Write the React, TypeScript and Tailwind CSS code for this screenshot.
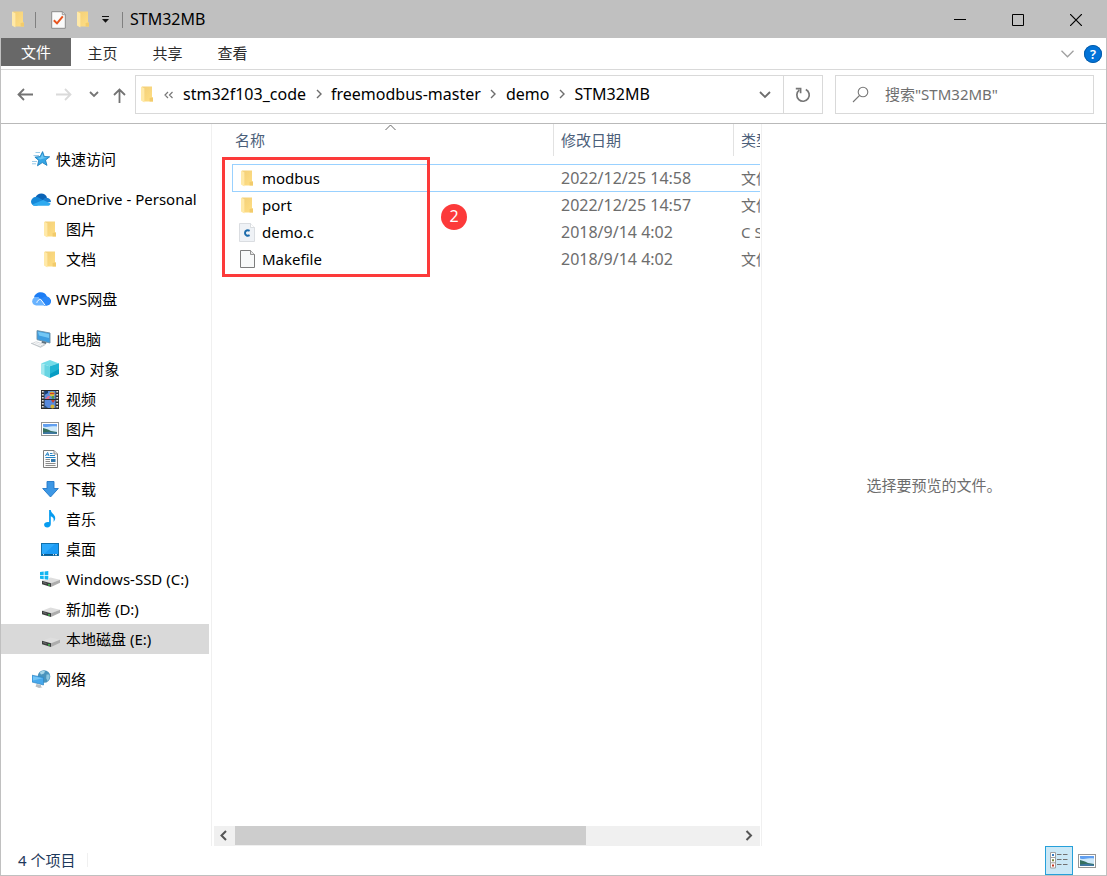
import type { ReactNode } from "react";

type IconProps = { className?: string };

function FolderIcon({ className = "" }: IconProps) {
  return (
    <svg width="12" height="17" viewBox="0 0 12 17" className={`shrink-0 ${className}`} aria-hidden="true">
      <defs>
        <linearGradient id="folderBack" x1="0" x2="1" y1="0" y2="1">
          <stop offset="0" stopColor="#f3cf78" />
          <stop offset="1" stopColor="#ffdf85" />
        </linearGradient>
      </defs>
      <path d="M1 .5H11V11.5H12V15.5H2L1 14Z" fill="url(#folderBack)" />
      <path d="M11 11.5H12V15.5H8.6V12Z" fill="#f2cb6c" />
      <path d="M0 .5L3.4 2.3V16.6L0 14.5Z" fill="#ffe9a8" />
    </svg>
  );
}

function TaskIcon() {
  return (
    <svg width="15" height="18" viewBox="0 0 15 18" aria-hidden="true">
      <path d="M.7 .7H11.5L14.3 3.5V17.3H.7Z" fill="#fafafa" stroke="#8c8c8c" strokeWidth="1" />
      <path d="M11.3 .7V3.7H14.3" fill="#ddd" stroke="#8c8c8c" strokeWidth=".8" />
      <path d="M2.8 9.3L6 12.4L11.8 5.4" fill="none" stroke="#e8541e" strokeWidth="2" />
    </svg>
  );
}

function StarIcon() {
  return (
    <svg width="18" height="16" viewBox="0 0 18 16" aria-hidden="true">
      <path d="M3.5 1.5H8M1.5 4.5H7M0 10.5H5M0 12.8H4" stroke="#9ccbe8" strokeWidth="1" />
      <path d="M10.6 .6L12.3 5.5L17.7 5.8L13.5 9.1L15 14.4L10.3 11.6L5.5 14.8L6.7 9.4L2.9 6.1L8.1 5.6Z" fill="#35a6e6" stroke="#1779b8" strokeWidth=".8" />
      <path d="M10.5 2.5L11.6 6.3L15.5 6.5L8 8.5L5.2 6.8L8.7 6.4Z" fill="#6cc6f3" />
    </svg>
  );
}

function OneDriveIcon() {
  return (
    <svg width="20" height="13" viewBox="0 0 20 13" aria-hidden="true">
      <path d="M4.5 4.3C6.4 -.7 14.3 -1 16 4.6L11.5 8L4.4 7Z" fill="#0b63b6" />
      <path d="M0 8.8C0 5.4 3.3 3 7 4.2L13 7.8L6 12.8H4C1.7 12.8 0 11 0 8.8Z" fill="#1688d8" />
      <path d="M12 7.2C13.2 4.6 16 4.2 18 5.5C19.4 6.4 20 7.5 20 9L12.5 10Z" fill="#1b7fd0" />
      <path d="M1.3 11.5L12.1 7L19.6 10.5C19.2 12 18.2 12.8 16.5 12.8H4.1C2.9 12.8 2 12.4 1.3 11.5Z" fill="#2eaaf0" />
    </svg>
  );
}

function WpsCloudIcon() {
  return (
    <svg width="19" height="14" viewBox="0 0 19 14" aria-hidden="true">
      <path d="M2 5.5C2.8 -.7 13 -2 14.8 4.3L19 8C19.3 11.5 17.5 13.4 14.5 13.4H12L6.5 5.5Z" fill="#1c7df5" />
      <path d="M14.6 4.4C17.3 4.6 18.8 6.7 18.7 9.1C18.6 11.7 16.8 13.4 14.3 13.4H12.2L8 8.1C9.8 6 12 4.4 14.6 4.4Z" fill="#2b88f8" />
      <path d="M4.5 4.9C6.2 4.9 7.6 5.9 8.6 7.2L13.3 13.4H4.2C1.9 13.4 .2 11.5 .2 9.2C.2 6.8 2.1 4.9 4.5 4.9Z" fill="#69b3ff" />
      <path d="M4.8 10.8C5.2 8.9 7 7.3 8.7 7.3L13.2 13.3" stroke="#fff" strokeWidth="1" fill="none" />
    </svg>
  );
}

function ComputerIcon() {
  return (
    <svg width="20" height="18" viewBox="0 0 20 18" aria-hidden="true">
      <path d="M6 .6L19 3V13L6 9.6Z" fill="#3e9de0" stroke="#6c8ea5" strokeWidth=".9" />
      <path d="M7 1.8L18 3.9V8L8 5.5Z" fill="#73c7f5" />
      <path d="M11 11L15.5 12.2L15 14L10.5 13Z" fill="#5f7280" />
      <path d="M0 13.2L5.2 11.2L14.5 14.5L9.5 17.3Z" fill="#d5d9dc" />
      <path d="M2.5 13.2L10 15.8M4.3 12.4L12 15" stroke="#fff" strokeWidth=".8" />
      <path d="M0 13.2L9.5 17.3L14.5 14.5" fill="none" stroke="#a3abb2" strokeWidth=".6" />
    </svg>
  );
}

function CubeIcon() {
  return (
    <svg width="18" height="18" viewBox="0 0 18 18" aria-hidden="true">
      <path d="M0 3.5L9 0L18 3.5L9 6.5Z" fill="#74dce8" />
      <path d="M0 3.5L9 6.5V18L0 14Z" fill="#a3e8ef" />
      <path d="M9 6.5L18 3.5V14L9 18Z" fill="#069cc3" />
      <path d="M3.5 4.7L9 6.5V18L3.5 15.5Z" fill="#66d4e2" />
      <path d="M9 6.5L18 3.5V9L9 14Z" fill="#1fb4d3" />
    </svg>
  );
}

function VideoIcon() {
  return (
    <svg width="18" height="19" viewBox="0 0 18 19" aria-hidden="true">
      <rect width="18" height="19" fill="#2b2b2b" />
      <rect x="3.5" y="1" width="11" height="8" fill="#5d8fdf" />
      <rect x="3.5" y="10" width="11" height="8" fill="#588add" />
      <path d="M1.8 1V19M16.2 1V19" stroke="#e6e6e6" strokeWidth="1.8" strokeDasharray="1.6 1.4" />
      <path d="M3.5 1H7V3L3.5 5Z" fill="#183f70" />
      <circle cx="11" cy="4" r="2.5" fill="#d7c239" />
      <path d="M9 3.5H13.5" stroke="#cf3b2d" strokeWidth="1.4" />
      <circle cx="12" cy="7.5" r="1.4" fill="#4f9642" />
      <path d="M4 9L7 6H9L8 9Z" fill="#e16b8b" />
      <path d="M10 10L14 10L12 13Z" fill="#c94330" />
      <circle cx="11.5" cy="16.5" r="2" fill="#d7b434" />
      <path d="M3.5 15L7 18H3.5Z" fill="#274f7d" />
    </svg>
  );
}

function PictureIcon() {
  return (
    <svg width="18" height="14" viewBox="0 0 18 14" aria-hidden="true">
      <rect x=".5" y=".5" width="17" height="13" fill="#fff" stroke="#959595" />
      <rect x="2" y="2" width="14" height="10" fill="#cfe9fa" />
      <path d="M2 2H16V4.5C11 3.5 7 6 2 4.5Z" fill="#619ff0" />
      <path d="M2 6L7 7.5L10 9L16 10V12H2Z" fill="#35705f" />
      <path d="M2 10.5L8 9.8L16 10.8V12H2Z" fill="#3f78a2" />
    </svg>
  );
}

function DocumentIcon() {
  return (
    <svg width="15" height="18" viewBox="0 0 15 18" aria-hidden="true">
      <path d="M.5 .5H11L14.5 4V17.5H.5Z" fill="#fcfcfc" stroke="#7e7e7e" />
      <path d="M11 .5V4H14.5" fill="#e4e4e4" stroke="#7e7e7e" strokeWidth=".8" />
      <path d="M2.4 6L4.6 2.5L6 6M3.3 4.8H5.4M7 3.5H9.5M7 5.5H12" fill="none" stroke="#2382c4" strokeWidth="1" />
      <path d="M2.5 7.5H12.5" stroke="#2382c4" />
      <path d="M2.5 9.5H7M2.5 11.5H7M2.5 13.5H12.5M2.5 15.5H12.5" stroke="#8b8b8b" />
      <rect x="8" y="9" width="4.5" height="3" fill="#337aad" />
    </svg>
  );
}

function DownloadIcon() {
  return (
    <svg width="17" height="17" viewBox="0 0 17 17" aria-hidden="true">
      <path d="M5 .5H12V7.5H16.3L8.5 16L.7 7.5H5Z" fill="#3c97e5" stroke="#2377c6" strokeWidth=".9" />
    </svg>
  );
}

function MusicIcon() {
  return (
    <svg width="12" height="18" viewBox="0 0 12 18" aria-hidden="true">
      <path d="M5.1 0H6.8C7 3.7 11.6 4.3 11.2 8.5C11.1 9.8 10.4 11 9.5 11.8C10.1 8.9 9.5 7.5 6.8 6.3V14C6.8 16.3 5.2 17.4 3.3 17.4C1.4 17.4 .1 16.4 .1 14.8C.1 12.9 2.4 11.7 5.1 12.2Z" fill="#079cf0" />
    </svg>
  );
}

function DesktopIcon() {
  return (
    <svg width="18" height="13" viewBox="0 0 18 13" aria-hidden="true">
      <rect x=".5" y=".5" width="17" height="12" fill="#1b9bf5" stroke="#1070ab" />
      <path d="M1 1H14L3 11H1Z" fill="#39b2ff" opacity=".6" />
      <path d="M1 11.7H17" stroke="#0b5687" strokeWidth="1.3" />
      <path d="M2 11.7H3M12 11.7H13M14 11.7H16" stroke="#fff" strokeWidth="1" />
    </svg>
  );
}

function DriveIcon({ system = false }: { system?: boolean }) {
  return (
    <svg width="20" height="16" viewBox="0 0 20 16" aria-hidden="true">
      <path d="M2 9.8L10.5 6.5L20 8.8L11 12.4Z" fill="#dedede" />
      <path d="M2 9.8L11 12.2V16L2 13.2Z" fill="#3c3e3f" />
      <path d="M11 12.2L20 8.8V11.8L11 16Z" fill="#adadad" />
      <path d="M3 11.5L6.5 12.5" stroke="#888" strokeWidth=".7" />
      <circle cx="9" cy="13.8" r=".9" fill="#46dd54" />
      {system && (
        <>
          <path d="M0 0H9V9H0Z" fill="#fff" />
          <path d="M0 1L3.7 .5V3.9H0ZM4.6 .4L8.3 0V3.9H4.6ZM0 4.8H3.7V8.2L0 7.7ZM4.6 4.8H8.3V8.7L4.6 8.3Z" fill="#13b6f1" />
        </>
      )}
    </svg>
  );
}

function NetworkIcon() {
  return (
    <svg width="19" height="18" viewBox="0 0 19 18" aria-hidden="true">
      <circle cx="12" cy="6.5" r="6.3" fill="#4a94bd" />
      <path d="M8 2.2C9.6 .8 11.6 .6 13 1.2L12 3.6L9.5 4.6L8.5 4Z" fill="#a7d6e8" />
      <path d="M14.5 4.4L17.4 4.6C18.2 7.4 17 10 15.6 11L14.2 8.2Z" fill="#8cc6df" />
      <path d="M0 5.2L11.5 7.5V15L0 12Z" fill="#47a8ec" stroke="#2f86c4" strokeWidth=".7" />
      <path d="M1 6.2L10.5 8.2L1 10.5Z" fill="#74c5f6" />
      <path d="M4.5 14L9 15V16.5L10.5 17.2L7 18L3.5 16.5Z" fill="#b7bec3" />
    </svg>
  );
}

function CFileIcon() {
  return (
    <svg width="16" height="19" viewBox="0 0 16 19" aria-hidden="true">
      <path d="M.5 .5H11.5L15.5 4.5V18.5H.5Z" fill="#eff2f6" stroke="#dadde1" />
      <path d="M11.5 .5V4.5H15.5" fill="#fff" stroke="#d2d5d9" strokeWidth=".8" />
      <path d="M10.6 7.8C8.8 6.8 6 7.4 6 10C6 12.7 8.8 13.2 10.6 12.2" fill="none" stroke="#1d6bab" strokeWidth="2" />
    </svg>
  );
}

function PlainFileIcon() {
  return (
    <svg width="15" height="18" viewBox="0 0 15 18" aria-hidden="true">
      <path d="M.5 .5H10.5L14.5 4.5V17.5H.5Z" fill="#f8f9f9" stroke="#7d7d7d" />
      <path d="M10.5 .5V4.5H14.5" fill="#e8e8e8" stroke="#7d7d7d" strokeWidth=".8" />
    </svg>
  );
}

function Chevron({ d, w, h, color, stroke = 1 }: { d: string; w: number; h: number; color: string; stroke?: number }) {
  return (
    <svg width={w} height={h} viewBox={`0 0 ${w} ${h}`} className="shrink-0" aria-hidden="true">
      <path d={d} fill="none" stroke={color} strokeWidth={stroke} />
    </svg>
  );
}

type NavEntry = { label: string; icon: ReactNode; child?: boolean; selected?: boolean };

const navGroups: NavEntry[][] = [
  [{ label: "快速访问", icon: <StarIcon /> }],
  [
    { label: "OneDrive - Personal", icon: <OneDriveIcon /> },
    { label: "图片", icon: <FolderIcon />, child: true },
    { label: "文档", icon: <FolderIcon />, child: true },
  ],
  [{ label: "WPS网盘", icon: <WpsCloudIcon /> }],
  [
    { label: "此电脑", icon: <ComputerIcon /> },
    { label: "3D 对象", icon: <CubeIcon />, child: true },
    { label: "视频", icon: <VideoIcon />, child: true },
    { label: "图片", icon: <PictureIcon />, child: true },
    { label: "文档", icon: <DocumentIcon />, child: true },
    { label: "下载", icon: <DownloadIcon />, child: true },
    { label: "音乐", icon: <MusicIcon />, child: true },
    { label: "桌面", icon: <DesktopIcon />, child: true },
    { label: "Windows-SSD (C:)", icon: <DriveIcon system />, child: true },
    { label: "新加卷 (D:)", icon: <DriveIcon />, child: true },
    { label: "本地磁盘 (E:)", icon: <DriveIcon />, child: true, selected: true },
  ],
  [{ label: "网络", icon: <NetworkIcon /> }],
];

const files = [
  { name: "modbus", date: "2022/12/25 14:58", type: "文件夹", icon: <FolderIcon />, focused: true },
  { name: "port", date: "2022/12/25 14:57", type: "文件夹", icon: <FolderIcon /> },
  { name: "demo.c", date: "2018/9/14 4:02", type: "C Source", icon: <CFileIcon /> },
  { name: "Makefile", date: "2018/9/14 4:02", type: "文件", icon: <PlainFileIcon /> },
];

const crumbs = ["stm32f103_code", "freemodbus-master", "demo", "STM32MB"];

function TitleBar() {
  return (
    <header className="flex h-[37px] shrink-0 items-center bg-[#c0c0c0] pr-px pl-[11px]">
      <FolderIcon />
      <span className="ml-[11px] h-4 w-px bg-[#808080]" />
      <button type="button" aria-label="属性" className="ml-[15px]">
        <TaskIcon />
      </button>
      <button type="button" aria-label="新建文件夹" className="ml-[11px]">
        <FolderIcon />
      </button>
      <button type="button" aria-label="自定义快速访问工具栏" className="ml-3">
        <svg width="9" height="8" viewBox="0 0 9 8" aria-hidden="true">
          <path d="M1 .5H8" stroke="#111" />
          <path d="M1 3H8L4.5 6.8Z" fill="#111" />
        </svg>
      </button>
      <span className="ml-3 h-4 w-px bg-[#808080]" />
      <h1 className="ml-[7px] flex-1 pb-px text-base leading-5">STM32MB</h1>
      <button type="button" aria-label="最小化" className="flex h-full w-[58px] items-center justify-center">
        <Chevron d="M0 5.5H12" w={12} h={12} color="#000" />
      </button>
      <button type="button" aria-label="最大化" className="flex h-full w-[58px] items-center justify-center">
        <Chevron d="M.5 .5H11.5V11.5H.5Z" w={12} h={12} color="#000" />
      </button>
      <button type="button" aria-label="关闭" className="flex h-full w-[58px] items-center justify-center">
        <Chevron d="M0 0L12 12M12 0L0 12" w={12} h={12} color="#000" stroke={1.2} />
      </button>
    </header>
  );
}

function Ribbon() {
  return (
    <div className="flex h-8 shrink-0 border-b border-[#d9d9d9]">
      <button type="button" className="h-7 w-[70px] bg-[#686868] text-white">文件</button>
      {["主页", "共享", "查看"].map((tab) => (
        <button key={tab} type="button" className="h-[30px] w-[65px] pr-[2px] text-[#2b2b2b]">{tab}</button>
      ))}
      <div className="ml-auto flex items-center gap-[10px] pr-1">
        <button type="button" aria-label="展开功能区">
          <Chevron d="M.5 .8L6.5 6.8L12.5 .8" w={13} h={8} color="#a0a0a0" stroke={1.3} />
        </button>
        <button type="button" aria-label="帮助" className="flex size-[18px] items-center justify-center rounded-full bg-[#0273d8] text-[13px] leading-[18px] font-semibold text-white ring-1 ring-[#075ca8] ring-inset">
          ?
        </button>
      </div>
    </div>
  );
}

function AddressRow() {
  return (
    <div className="flex h-[54px] shrink-0 border-b border-[#b9b9b9] pt-[5px] pr-3">
      <div className="flex h-[39px] shrink-0 items-center pr-[6px]">
        <button type="button" aria-label="后退" className="flex w-12 justify-center">
          <Chevron d="M16 6.5H1.5M7 1L1.5 6.5L7 12" w={16} h={13} color="#737373" stroke={1.8} />
        </button>
        <button type="button" aria-label="前进" className="flex w-[30px] justify-center">
          <Chevron d="M0 6.5H14.5M9 1L14.5 6.5L9 12" w={16} h={13} color="#dadada" stroke={1.8} />
        </button>
        <button type="button" aria-label="最近浏览的位置" className="flex w-[30px] justify-center">
          <Chevron d="M1 1L5 5L9 1" w={10} h={7} color="#757575" stroke={1.8} />
        </button>
        <button type="button" aria-label="向上" className="flex w-5 justify-center pt-px">
          <Chevron d="M6.5 15V1.5M1 7L6.5 1.5L12 7" w={13} h={15} color="#737373" stroke={1.8} />
        </button>
      </div>
      <div className="flex h-[39px] min-w-0 flex-1 items-center border border-[#d9d9d9] pl-[5px]">
        <FolderIcon />
        <button type="button" aria-label="上级位置" className="flex w-[30px] pl-[11px]">
          <Chevron d="M4 1L1 4L4 7M8.5 1L5.5 4L8.5 7" w={9} h={8} color="#777" stroke={1.2} />
        </button>
        <nav aria-label="路径" className="flex min-w-0 flex-1 items-center overflow-hidden pb-px text-base leading-6 whitespace-nowrap">
          {crumbs.map((crumb, i) => (
            <span key={crumb} className="flex items-center">
              {i > 0 && (
                <span className="flex w-[25px] justify-center">
                  <Chevron d="M1 1L5 5L1 9" w={6} h={10} color="#6d6d6d" stroke={1.4} />
                </span>
              )}
              <button type="button">{crumb}</button>
            </span>
          ))}
        </nav>
        <button type="button" aria-label="以前的位置" className="flex w-9 justify-center">
          <Chevron d="M1 1L6 6L11 1" w={12} h={8} color="#6d6d6d" stroke={1.8} />
        </button>
        <button type="button" aria-label="刷新" className="flex h-full w-[39px] items-center justify-center border-l border-[#d9d9d9]">
          <svg width="16" height="16" viewBox="0 0 16 16" fill="none" stroke="#767676" strokeWidth="1.7" aria-hidden="true">
            <path d="M10.8 2.5A6.2 6.2 0 1 1 4.2 3.2M.8 1.6H5.6V6.2" />
          </svg>
        </button>
      </div>
      <div className="ml-3 flex h-[39px] w-[259px] items-center border border-[#d9d9d9] pl-4">
        <svg width="18" height="17" viewBox="0 0 18 17" fill="none" stroke="#777" strokeWidth="1.1" className="shrink-0" aria-hidden="true">
          <circle cx="11" cy="6" r="4.8" />
          <path d="M7.5 9.5L1 16" />
        </svg>
        <input
          type="search"
          aria-label="搜索"
          placeholder={'搜索"STM32MB"'}
          className="ml-[15px] w-full min-w-0 bg-transparent pb-px outline-none placeholder:text-[#6f6f6f]"
        />
      </div>
    </div>
  );
}

function NavPane() {
  return (
    <nav aria-label="导航窗格" className="flex flex-col gap-[10px] border-r border-[#f0f0f0] pt-5 pr-[2px]">
      {navGroups.map((group, g) => (
        <ul key={g}>
          {group.map((item) => (
            <li key={item.label}>
              <a
                href="#"
                className={`flex h-[30px] items-center whitespace-nowrap ${item.child ? "pl-[37px]" : "pl-[29px]"} ${item.selected ? "bg-[#d9d9d9]" : ""}`}
              >
                <span className={`flex shrink-0 items-center justify-center ${item.child ? "w-6" : "w-[22px]"}`}>{item.icon}</span>
                <span className="ml-1">{item.label}</span>
              </a>
            </li>
          ))}
        </ul>
      ))}
    </nav>
  );
}

function FilePane() {
  return (
    <section aria-label="文件列表" className="relative flex flex-col border-r border-[#f0f0f0] pr-px">
      <div className="flex-1 overflow-hidden pl-5">
        <table className="w-[860px] table-fixed border-collapse text-left">
          <colgroup>
            <col className="w-[322px]" />
            <col className="w-[180px]" />
            <col />
          </colgroup>
          <thead>
            <tr className="h-10 align-top text-[#4c607a]">
              <th className="relative p-0 font-normal">
                <div className="h-8 border-r border-[#e2e2e2] pl-[3px] leading-8">名称</div>
                <span className="absolute top-0 left-[153px]">
                  <Chevron d="M.5 6L5.5 1L10.5 6" w={11} h={7} color="#666" />
                </span>
              </th>
              <th className="p-0 font-normal">
                <div className="h-8 border-r border-[#e2e2e2] pl-[7px] leading-8">修改日期</div>
              </th>
              <th className="p-0 font-normal">
                <div className="h-8 pl-[7px] leading-8">类型</div>
              </th>
            </tr>
          </thead>
          <tbody>
            {files.map((f) => (
              <tr key={f.name} className={f.focused ? "h-7 outline-1 -outline-offset-1 outline-[#99d1ff]" : "h-[27px]"}>
                <td className={f.focused ? "p-0" : "p-0 pb-px"}>
                  <div className="flex items-center">
                    <span className="flex h-5 w-[30px] items-center justify-center">{f.icon}</span>
                    {f.name}
                  </div>
                </td>
                <td className={`text-base leading-5 text-[#6d6d6d] ${f.focused ? "p-0 pl-[7px]" : "p-0 pb-px pl-[7px]"}`}>{f.date}</td>
                <td className={`text-[#6d6d6d] ${f.focused ? "p-0 pl-[7px]" : "p-0 pb-px pl-[7px]"}`}>{f.type}</td>
              </tr>
            ))}
          </tbody>
        </table>
      </div>
      <div className="ml-[2px] flex h-5 items-stretch bg-[#f0f0f0] pb-px">
        <button type="button" aria-label="向左滚动" className="flex w-[21px] items-center justify-center">
          <Chevron d="M6 1L1.5 5.5L6 10" w={9} h={11} color="#555" stroke={2} />
        </button>
        <div className="flex-1">
          <div className="h-full w-[69.6%] bg-[#cdcdcd]" />
        </div>
        <button type="button" aria-label="向右滚动" className="flex w-[21px] items-center justify-center">
          <Chevron d="M1.5 1L6 5.5L1.5 10" w={9} h={11} color="#555" stroke={2} />
        </button>
      </div>
      <div className="pointer-events-none absolute top-[33px] left-[10px] h-[120px] w-52 border-3 border-[#fc3a3a]" />
      <span className="absolute top-20 left-[229px] flex size-[26px] items-center justify-center rounded-full bg-[#fc3a3a] pb-[2px] text-base text-white">2</span>
    </section>
  );
}

function StatusBar() {
  return (
    <footer className="flex h-[29px] shrink-0 items-center pr-[10px] pl-[17px] text-[#1e395b]">
      <span className="mb-[2px] border-r border-[#f0f0f0] pr-3 leading-[14px]">4 个项目</span>
      <div className="ml-auto flex h-full items-center gap-[5px]">
        <button type="button" aria-label="详细信息" aria-pressed="true" className="flex h-full w-7 items-center justify-center border border-[#26a0da] bg-[#cbe8f6]">
          <svg width="18" height="17" viewBox="0 0 18 17" aria-hidden="true">
            <path d="M.5 .5H5.5V16H.5ZM.5 5.5H5.5M.5 10.8H5.5" fill="#fff" stroke="#a0a0a0" />
            <path d="M2 2H4V4H2Z" fill="#377bc2" />
            <path d="M2 7.2H4V9.2H2Z" fill="#76863a" />
            <path d="M2 12.5H4V14.5H2Z" fill="#c53820" />
            <path d="M7 2.5H11.5M13 2.5H17.5M7 7.5H11.5M13 7.5H17.5M7 12.5H11.5M13 12.5H17.5" stroke="#727272" />
          </svg>
        </button>
        <button type="button" aria-label="大缩略图">
          <PictureIcon />
        </button>
      </div>
    </footer>
  );
}

export default function App() {
  return (
    <div className="flex min-h-screen flex-col border border-[#c0c0c0] bg-white font-['Noto_Sans','Noto_Sans_CJK_SC',sans-serif] text-[15px] leading-5 text-black">
      <TitleBar />
      <Ribbon />
      <AddressRow />
      <main className="grid flex-1 grid-cols-[211px_minmax(0,550fr)_minmax(0,344fr)]">
        <NavPane />
        <FilePane />
        <aside aria-label="预览窗格" className="flex items-center justify-center text-[#6d6d6d]">
          <p>选择要预览的文件。</p>
        </aside>
      </main>
      <StatusBar />
    </div>
  );
}
